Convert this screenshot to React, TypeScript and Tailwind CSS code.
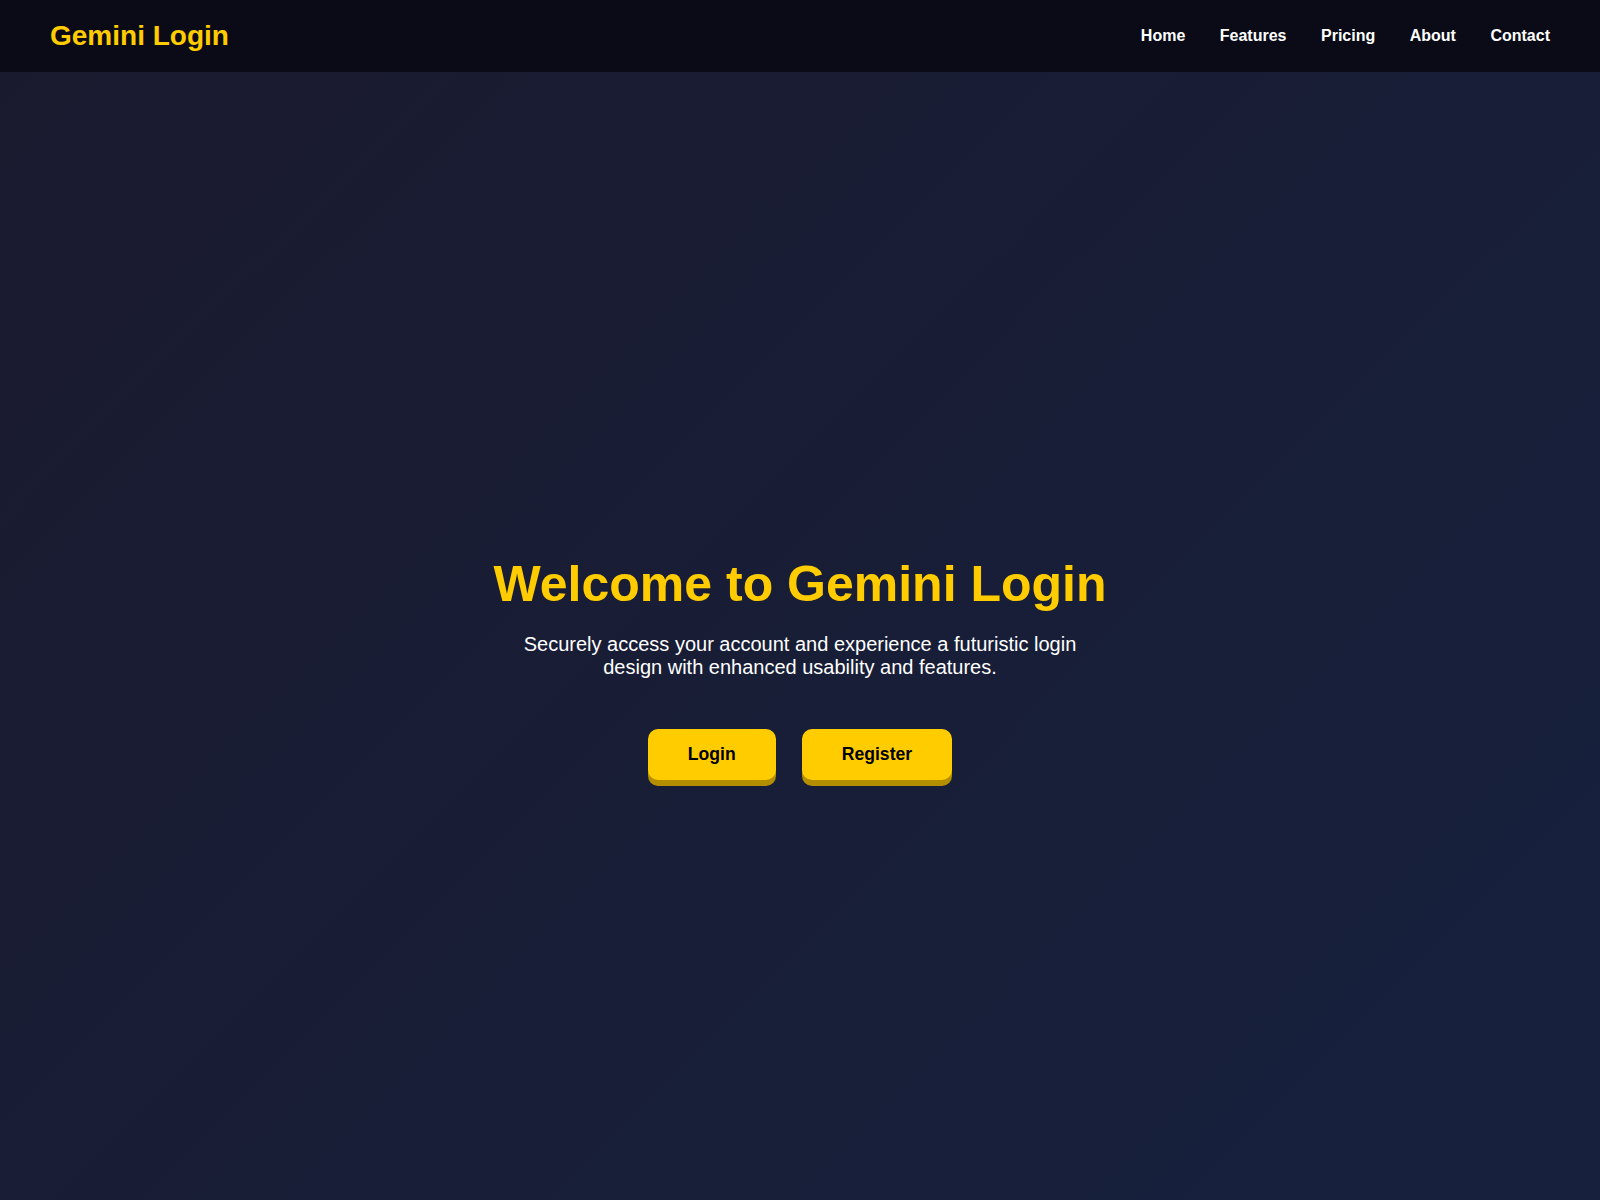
import { useState } from "react";

const links = ["Home", "Features", "Pricing", "About", "Contact"];

export default function App() {
  const [active, setActive] = useState<string>("Home");

  return (
    <div className="min-h-screen bg-[linear-gradient(135deg,#1a1a2e,#16213e)] font-['Liberation_Sans',Arial,sans-serif] text-white">
      <header className="flex h-[72px] items-center justify-between bg-[#0a0b16] px-[50px]">
        <h1 className="text-[28px] font-bold leading-8 text-[#ffcc00]">Gemini Login</h1>
        <nav className="flex items-center gap-[34.5px]">
          {links.map((link) => (
            <a
              key={link}
              onClick={() => setActive(link)}
              className={`cursor-pointer text-base font-bold text-white hover:text-[#ffcc00] ${active === link ? "" : ""}`}
            >
              {link}
            </a>
          ))}
        </nav>
      </header>

      <main className="flex h-screen flex-col items-center justify-center pb-[8px] text-center">
        <h2 className="mb-[19px] text-[50px] font-bold leading-[1.15] text-[#ffcc00]">Welcome to Gemini Login</h2>
        <p className="mb-[50px] max-w-[600px] text-[20px] leading-[23px] text-white">
          Securely access your account and experience a futuristic login design with enhanced usability and features.
        </p>
        <div className="flex items-center gap-[26px]">
          <button className="rounded-[10px] bg-[#ffcc00] px-10 py-[15px] text-[17.6px] font-bold leading-[21px] text-black shadow-[0_6px_0_#b38f00]">
            Login
          </button>
          <button className="rounded-[10px] bg-[#ffcc00] px-10 py-[15px] text-[17.6px] font-bold leading-[21px] text-black shadow-[0_6px_0_#b38f00]">
            Register
          </button>
        </div>
      </main>
    </div>
  );
}
